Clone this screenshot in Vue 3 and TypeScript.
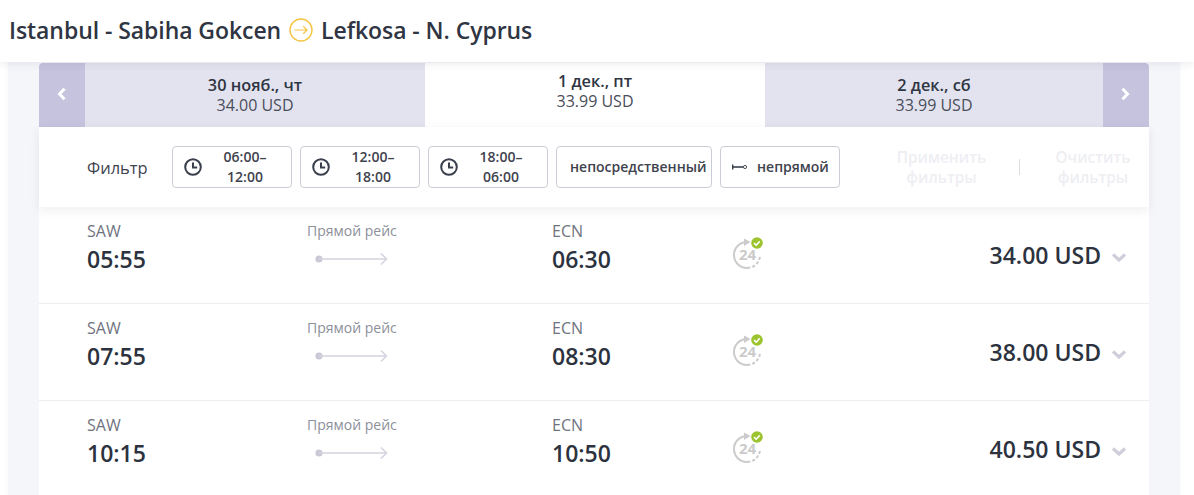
<script setup lang="ts">
interface Tab { date: string; price: string; active?: boolean }
interface Flight { dep: string; arr: string; price: string }
const tabs: Tab[] = [
  { date: '30 нояб., чт', price: '34.00 USD' },
  { date: '1 дек., пт', price: '33.99 USD', active: true },
  { date: '2 дек., сб', price: '33.99 USD' },
]
const times = [['06:00–', '12:00'], ['12:00–', '18:00'], ['18:00–', '06:00']]
const flights: Flight[] = [
  { dep: '05:55', arr: '06:30', price: '34.00 USD' },
  { dep: '07:55', arr: '08:30', price: '38.00 USD' },
  { dep: '10:15', arr: '10:50', price: '40.50 USD' },
]
</script>

<template>
  <div class="page">
    <header class="header">
      <span>Istanbul - Sabiha Gokcen</span>
      <svg class="route-icon" width="24" height="24" viewBox="0 0 24 24" fill="none" stroke="#f4c542">
        <circle cx="12" cy="12" r="11" stroke-width="1.4" />
        <path d="M5.5 12H18M14.2 8.2l3.9 3.8-3.9 3.8" stroke-width="1.2" />
      </svg>
      <span>Lefkosa - N. Cyprus</span>
    </header>
    <div class="backdrop">
      <main class="card">
        <nav class="tabs">
          <button class="arrow arrow-left" aria-label="Назад">
            <svg width="12" height="14" viewBox="0 0 12 14" fill="none" stroke="#fff" stroke-width="3">
              <path d="M8.5 1.8 3.5 7l5 5.2" />
            </svg>
          </button>
          <div v-for="t in tabs" :key="t.date" class="tab" :class="{ active: t.active }">
            <strong>{{ t.date }}</strong>
            <span>{{ t.price }}</span>
          </div>
          <button class="arrow arrow-right" aria-label="Вперёд">
            <svg width="12" height="14" viewBox="0 0 12 14" fill="none" stroke="#fff" stroke-width="3">
              <path d="M2.5 1.8l5 5.2-5 5.2" />
            </svg>
          </button>
        </nav>
        <section class="filters">
          <span class="filter-label">Фильтр</span>
          <div class="filter-buttons">
            <button v-for="t in times" :key="t[0]" class="fbtn time">
              <svg width="18" height="18" viewBox="0 0 18 18" fill="none" stroke="#3a3f4c" stroke-width="2">
                <circle cx="9" cy="9" r="7.8" />
                <path d="M9 4.6V9.4H13.2" />
              </svg>
              <span class="time-text">{{ t[0] }}<br />{{ t[1] }}</span>
            </button>
            <button class="fbtn direct">непосредственный</button>
            <button class="fbtn indirect">
              <svg width="16" height="6" viewBox="0 0 16 6" fill="none">
                <path d="M0.7 0.5v5" stroke="#3a3f4c" stroke-width="1.4" />
                <path d="M0 3h11" stroke="#3a3f4c" stroke-width="1.6" />
                <circle cx="13" cy="3" r="1.6" stroke="#3a3f4c" stroke-width="0.9" />
              </svg>
              непрямой
            </button>
          </div>
          <div class="filter-actions">
            <span class="action apply">Применить фильтры</span>
            <i class="sep"></i>
            <span class="action clear">Очистить фильтры</span>
          </div>
        </section>
        <div class="flights">
          <article v-for="f in flights" :key="f.dep" class="flight">
            <div class="point dep">
              <span class="code">SAW</span>
              <span class="time-big">{{ f.dep }}</span>
            </div>
            <div class="route">
              <span class="route-label">Прямой рейс</span>
              <svg width="74" height="14" viewBox="0 0 74 14" fill="none">
                <circle cx="5" cy="7" r="3.6" fill="#c9c8d6" />
                <path d="M5 7H72.5M67 1.5 72.5 7 67 12.5" stroke="#d5d4e0" stroke-width="1.6" />
              </svg>
            </div>
            <div class="point arr">
              <span class="code">ECN</span>
              <span class="time-big">{{ f.arr }}</span>
            </div>
            <div class="badge">
              <svg width="34" height="34" viewBox="0 0 34 34" fill="none">
                <path d="M15 6A13 13 0 1 0 28 19" stroke="#cbcbcb" stroke-width="2" stroke-dasharray="44 2 3 2 3 2 3 2 100" />
                <path d="M12 2.5 18.5 6 12 10z" fill="#cbcbcb" />
                <text x="15.5" y="24" text-anchor="middle" class="badge-text">24</text>
                <circle cx="25" cy="7" r="5.8" fill="#9cc42e" />
                <path d="M22.1 7.1l2.1 2.1 3.5-3.8" stroke="#fff" stroke-width="1.6" />
              </svg>
            </div>
            <div class="price">
              <span>{{ f.price }}</span>
              <svg width="14" height="9" viewBox="0 0 14 9" fill="none" stroke="#cfceda" stroke-width="3.2">
                <path d="M1 1.5l6 5.5 6-5.5" />
              </svg>
            </div>
          </article>
        </div>
      </main>
    </div>
  </div>
</template>

<style>
html, body { margin: 0; background: #fff; overflow: hidden; }
</style>

<style scoped>
.page {
  width: 1194px;
  height: 495px;
  overflow: hidden;
  background: #fff;
  font-family: "Open Sans", "Noto Sans", sans-serif;
  color: #31353f;
}
.header {
  height: 62px;
  box-sizing: border-box;
  padding: 0 0 3px 9px;
  display: flex;
  align-items: center;
  gap: 8px;
  background: #fff;
  font-size: 23px;
  font-weight: 600;
  letter-spacing: -0.07px;
  color: #2f3542;
  box-shadow: 0 2px 8px rgba(40, 40, 70, 0.09);
  position: relative;
  z-index: 2;
}
.route-icon { flex: none; }
.backdrop {
  margin: 0 14px 0 8px;
  padding: 1px 31px 0;
  background: #f5f6fa;
  box-shadow: 0 0 5px #f5f6fa;
  height: 440px;
}
.card { width: 1110px; background: #fff; }
.tabs { display: flex; height: 64px; }
.arrow {
  width: 46px;
  flex: none;
  border: 0;
  padding: 0 0 2px;
  background: #c6c3df;
  display: flex;
  align-items: center;
  justify-content: center;
}
.arrow-left { border-top-left-radius: 4px; }
.arrow-right { border-top-right-radius: 4px; }
.tab {
  width: 340px;
  flex: none;
  display: flex;
  flex-direction: column;
  align-items: center;
  justify-content: center;
  background: #e3e3f0;
  font-size: 16px;
  line-height: 20px;
  color: #4a4e59;
}
.tab:nth-of-type(3) { width: 338px; }
.tab strong { font-size: 16.3px; font-weight: 600; color: #2f3542; }
.tab span { font-weight: 400; }
.tab.active { background: #fff; padding-bottom: 9px; }
.filters {
  height: 80px;
  box-sizing: border-box;
  display: flex;
  align-items: center;
  padding-left: 48px;
  background: #fff;
  box-shadow: 0 3px 10px rgba(40, 40, 70, 0.08);
  position: relative;
  z-index: 1;
}
.filter-label { width: 85px; font-size: 16.5px; color: #3f434e; }
.filter-buttons { display: flex; gap: 8px; }
.fbtn {
  height: 42px;
  box-sizing: border-box;
  border: 1px solid #ccccd6;
  border-radius: 4px;
  background: #fff;
  font: 600 14px/20px "Open Sans", "Noto Sans", sans-serif;
  color: #3f434e;
  display: flex;
  align-items: center;
  padding: 0;
}
.time { width: 120px; padding-left: 11px; }
.time-text { flex: 1; text-align: center; padding-right: 3px; }
.direct { width: 156px; padding-left: 13px; white-space: nowrap; }
.indirect { width: 120px; padding-left: 11px; gap: 9px; }
.filter-actions {
  display: flex;
  align-items: center;
  margin-left: 49.5px;
  font-size: 15.3px;
  font-weight: 600;
  line-height: 20px;
  color: #eeeef3;
  text-align: center;
}
.action { display: block; }
.apply { width: 104px; }
.clear { width: 90px; margin-left: 28px; }
.sep { width: 1px; height: 16px; background: #dcdce2; margin-left: 25.5px; }
.flight {
  height: 97px;
  box-sizing: border-box;
  border-bottom: 1px solid #eeeef2;
  display: flex;
  align-items: flex-start;
  padding: 14px 23px 0 48px;
  position: relative;
}
.point { display: flex; flex-direction: column; }
.dep { width: 220px; }
.arr { width: 183px; }
.code { font-size: 16px; line-height: 21px; color: #6f7380; }
.time-big { font-size: 23px; font-weight: 600; line-height: 34px; color: #2c323e; }
.route {
  width: 245px;
  display: flex;
  flex-direction: column;
  gap: 11px;
}
.route-label { font-size: 14px; line-height: 20px; color: #8d909b; }
.route svg { margin-left: 7px; }
.badge { width: 224px; padding-top: 15px; margin-left: -3px; }
.badge-text { font: 700 15px "Open Sans", sans-serif; fill: #cbcbcb; }
.price {
  margin-left: auto;
  display: flex;
  align-items: center;
  gap: 11px;
  padding-top: 16px;
  font-size: 23px;
  font-weight: 600;
  line-height: 36px;
  color: #2c323e;
}
.price svg { margin-top: 5px; }
</style>
